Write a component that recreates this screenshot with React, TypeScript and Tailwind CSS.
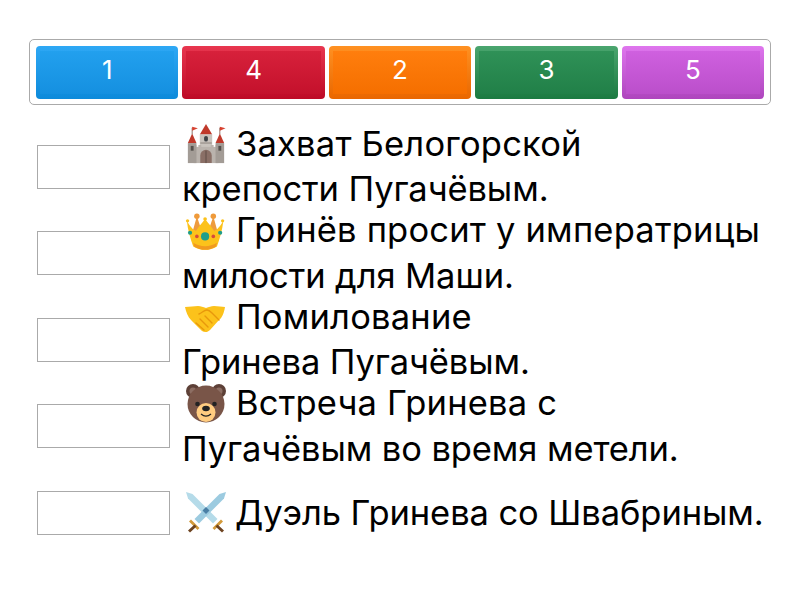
import React from "react";

const Castle = () => (
  <svg viewBox="-1 -1 44 44" className="w-[42px] h-[42px]">
    <path d="M21 0l-6.500 11h13z" fill="#c0392b" />
    <rect x="14.500" y="11" width="13" height="16" fill="#c9c3bd" />
    <rect x="19" y="12.500" width="4" height="6" rx="2" fill="#3f4347" />
    <path d="M15 19h12v2H15z" fill="#a9a29c" />
    <rect x="8" y="24" width="26" height="17" fill="#bab3ad" />
    <path d="M8 22h3v3H8zM13 22h3v3h-3zM26 22h3v3h-3zM31 22h3v3h-3z" fill="#bab3ad" />
    <path d="M6.500 10l-4.500 10h9z" fill="#c0392b" />
    <path d="M35.500 10l-4.500 10h9z" fill="#c0392b" />
    <rect x="2" y="20" width="9" height="21" fill="#a39c96" />
    <rect x="31" y="20" width="9" height="21" fill="#a39c96" />
    <rect x="5" y="23" width="3" height="5" fill="#55504c" />
    <rect x="34" y="23" width="3" height="5" fill="#55504c" />
    <path d="M6.500 4v7M35.500 4v7" stroke="#8d6e63" strokeWidth="1" />
    <path d="M6.500 3l6 1.500-6 2.500zM35.500 3l6 1.500-6 2.500z" fill="#d7402f" />
    <path d="M15 41V33a6 6 0 0 1 12 0v8z" fill="#8a6f66" />
    <path d="M21 28v13" stroke="#5d4a44" strokeWidth="1" />
  </svg>
);
const Crown = () => (
  <svg viewBox="-1 -4 46 46" className="w-[42px] h-[42px]">
    <circle cx="12" cy="4" r="3" fill="#ef9a3a" />
    <circle cx="30" cy="4" r="3" fill="#ef9a3a" />
    <path d="M12 4L7 22h11zM30 4l5 18H24z" fill="#ee9b3e" />
    <path d="M1 9c1 10 4 20 7 28 8 5 18 5 26 0 3-8 6-18 7-28-4 7-7 10-10 11-2-3-6-8-10-13-4 5-8 10-10 13-3-1-6-4-10-11z" fill="#fcc21b" />
    <path d="M8 33c8 5 18 5 26 0l-1 4c-8 5-16 5-24 0z" fill="#f19a1f" />
    <circle cx="1.800" cy="9" r="1.800" fill="#fcc21b" />
    <circle cx="40.200" cy="9" r="1.800" fill="#fcc21b" />
    <circle cx="21" cy="7" r="2" fill="#fcc21b" />
    <circle cx="21" cy="26" r="4.500" fill="#1f9e8a" />
    <circle cx="4.500" cy="22" r="2.300" fill="#1f9e8a" />
    <circle cx="37.500" cy="22" r="2.300" fill="#1f9e8a" />
    <circle cx="12" cy="26" r="2" fill="#d84b3a" />
    <circle cx="30" cy="26" r="2" fill="#d84b3a" />
  </svg>
);
const Hands = () => (
  <svg viewBox="0 0 42 42" className="w-[42px] h-[42px]">
    <path d="M0 11c5 0 9-1 13-1 3 0 5 1 8 2 3-1 5-2 8-2 4 0 8 1 11 1-1 6-3 11-6 13l-9 10c-2 2-5 3-8 1L6 24C3 21 1 16 0 11z" fill="#fcc21b" />
    <path d="M14 18c3-1 5-4 8-4 2 0 3 1 5 3l7 7M11 27l8 7M15 23l8 8M20 20l7 7" fill="none" stroke="#e8980c" strokeWidth="1.400" strokeLinecap="round" />
  </svg>
);
const Bear = () => (
  <svg viewBox="0 0 42 42" className="w-[42px] h-[42px]">
    <circle cx="8" cy="9" r="7" fill="#5d4037" />
    <circle cx="34" cy="9" r="7" fill="#5d4037" />
    <circle cx="8" cy="9" r="3.500" fill="#8d6e63" />
    <circle cx="34" cy="9" r="3.500" fill="#8d6e63" />
    <ellipse cx="21" cy="22" rx="18.500" ry="18.500" fill="#795548" />
    <ellipse cx="21" cy="30.500" rx="9.500" ry="9.500" fill="#ffcc80" />
    <circle cx="12.500" cy="22" r="2.300" fill="#222" />
    <circle cx="29.500" cy="22" r="2.300" fill="#222" />
    <ellipse cx="21" cy="26.500" rx="3.800" ry="2.800" fill="#222" />
    <path d="M16 32c3 2.500 7 2.500 10 0" stroke="#222" strokeWidth="1.300" fill="none" />
  </svg>
);
const Swords = () => (
  <svg viewBox="0 0 42 42" className="w-[42px] h-[42px]">
    <path d="M1 1l6.500 2 25 25-4.500 4.500L3 7.500z" fill="#b5dbe9" />
    <path d="M41 1l-6.500 2-25 25 4.500 4.500L39 7.500z" fill="#9ccbe0" />
    <path d="M21 16l3.500 3.500L21 23l-3.500-3.500z" fill="#4a7fa5" />
    <path d="M6 28.500l8.500 8.500-2 2L4 30.500zM36 28.500L27.500 37l2 2L38 30.500z" fill="#d39a3a" />
    <path d="M9.500 33.500l-6.500 6 2 2 6.500-6zM32.500 33.500l6.500 6-2 2-6.500-6z" fill="#6d4320" />
  </svg>
);

const buttons = [
  { n: "1", outer: "bg-[linear-gradient(#2ea8f5,#0d8ada)]", inner: "bg-[linear-gradient(#22a0ee,#1590e0)]" },
  { n: "4", outer: "bg-[linear-gradient(#e8364f,#bd0a26)]", inner: "bg-[linear-gradient(#d7213b,#c4112c)]" },
  { n: "2", outer: "bg-[linear-gradient(#ff9122,#e96700)]", inner: "bg-[linear-gradient(#ff7e0d,#f56f00)]" },
  { n: "3", outer: "bg-[linear-gradient(#4aa56e,#1b7a41)]", inner: "bg-[linear-gradient(#2f9157,#218048)]" },
  { n: "5", outer: "bg-[linear-gradient(#df76ee,#ae45bd)]", inner: "bg-[linear-gradient(#cf60df,#bb4fcb)]" },
];

const rows = [
  { icon: <Castle />, gap: "mr-[9px] tracking-[0.2px]", first: "Захват Белогорской", second: "крепости Пугачёвым." },
  { icon: <Crown />, gap: "mr-[9px] tracking-[0.2px]", first: "Гринёв просит у императрицы", second: "милости для Маши." },
  { icon: <Hands />, gap: "mr-[9px] tracking-[0.2px]", first: "Помилование", second: "Гринева Пугачёвым." },
  { icon: <Bear />, gap: "mr-[9px] tracking-[0.2px]", first: "Встреча Гринева с", second: "Пугачёвым во время метели." },
  { icon: <Swords />, gap: "mr-[8px] tracking-[-0.08px]", first: "Дуэль Гринева со Швабриным.", second: "" },
];

export default function App() {
  return (
    <div className="w-[800px] h-[600px] bg-white pt-[39px] px-[29px] font-['Inter','Liberation_Sans',sans-serif] overflow-hidden">
      <div className="h-[66px] border border-[#aaaaaa] rounded-[5px] pt-[6px] px-[6px] pb-[5px] flex gap-[4px]">
        {buttons.map((b) => (
          <div key={b.n} className={`flex-1 rounded-[4px] pt-[5px] px-[4px] pb-[5px] ${b.outer}`}>
            <div className={`h-full pb-[5px] flex items-center justify-center text-white text-[26px] leading-none ${b.inner}`}>
              {b.n}
            </div>
          </div>
        ))}
      </div>
      <div className="mt-[18.500px]">
        {rows.map((r, i) => (
          <div key={i} className="h-[86.500px] flex items-center">
            <div className="ml-[8px] w-[133px] h-[44px] shrink-0 border border-[#aaaaaa] bg-white" />
            <div className="ml-[12px] pb-[1px] text-[34.500px] leading-[45.500px] text-black whitespace-nowrap">
              <div className="flex items-center h-[45.500px]">
                <span className={`ml-[3px] inline-flex ${r.gap}`}>{r.icon}</span>
                <span className={r.gap}>{r.first}</span>
              </div>
              {r.second && <div className="tracking-[-0.1px]">{r.second}</div>}
            </div>
          </div>
        ))}
      </div>
    </div>
  );
}
